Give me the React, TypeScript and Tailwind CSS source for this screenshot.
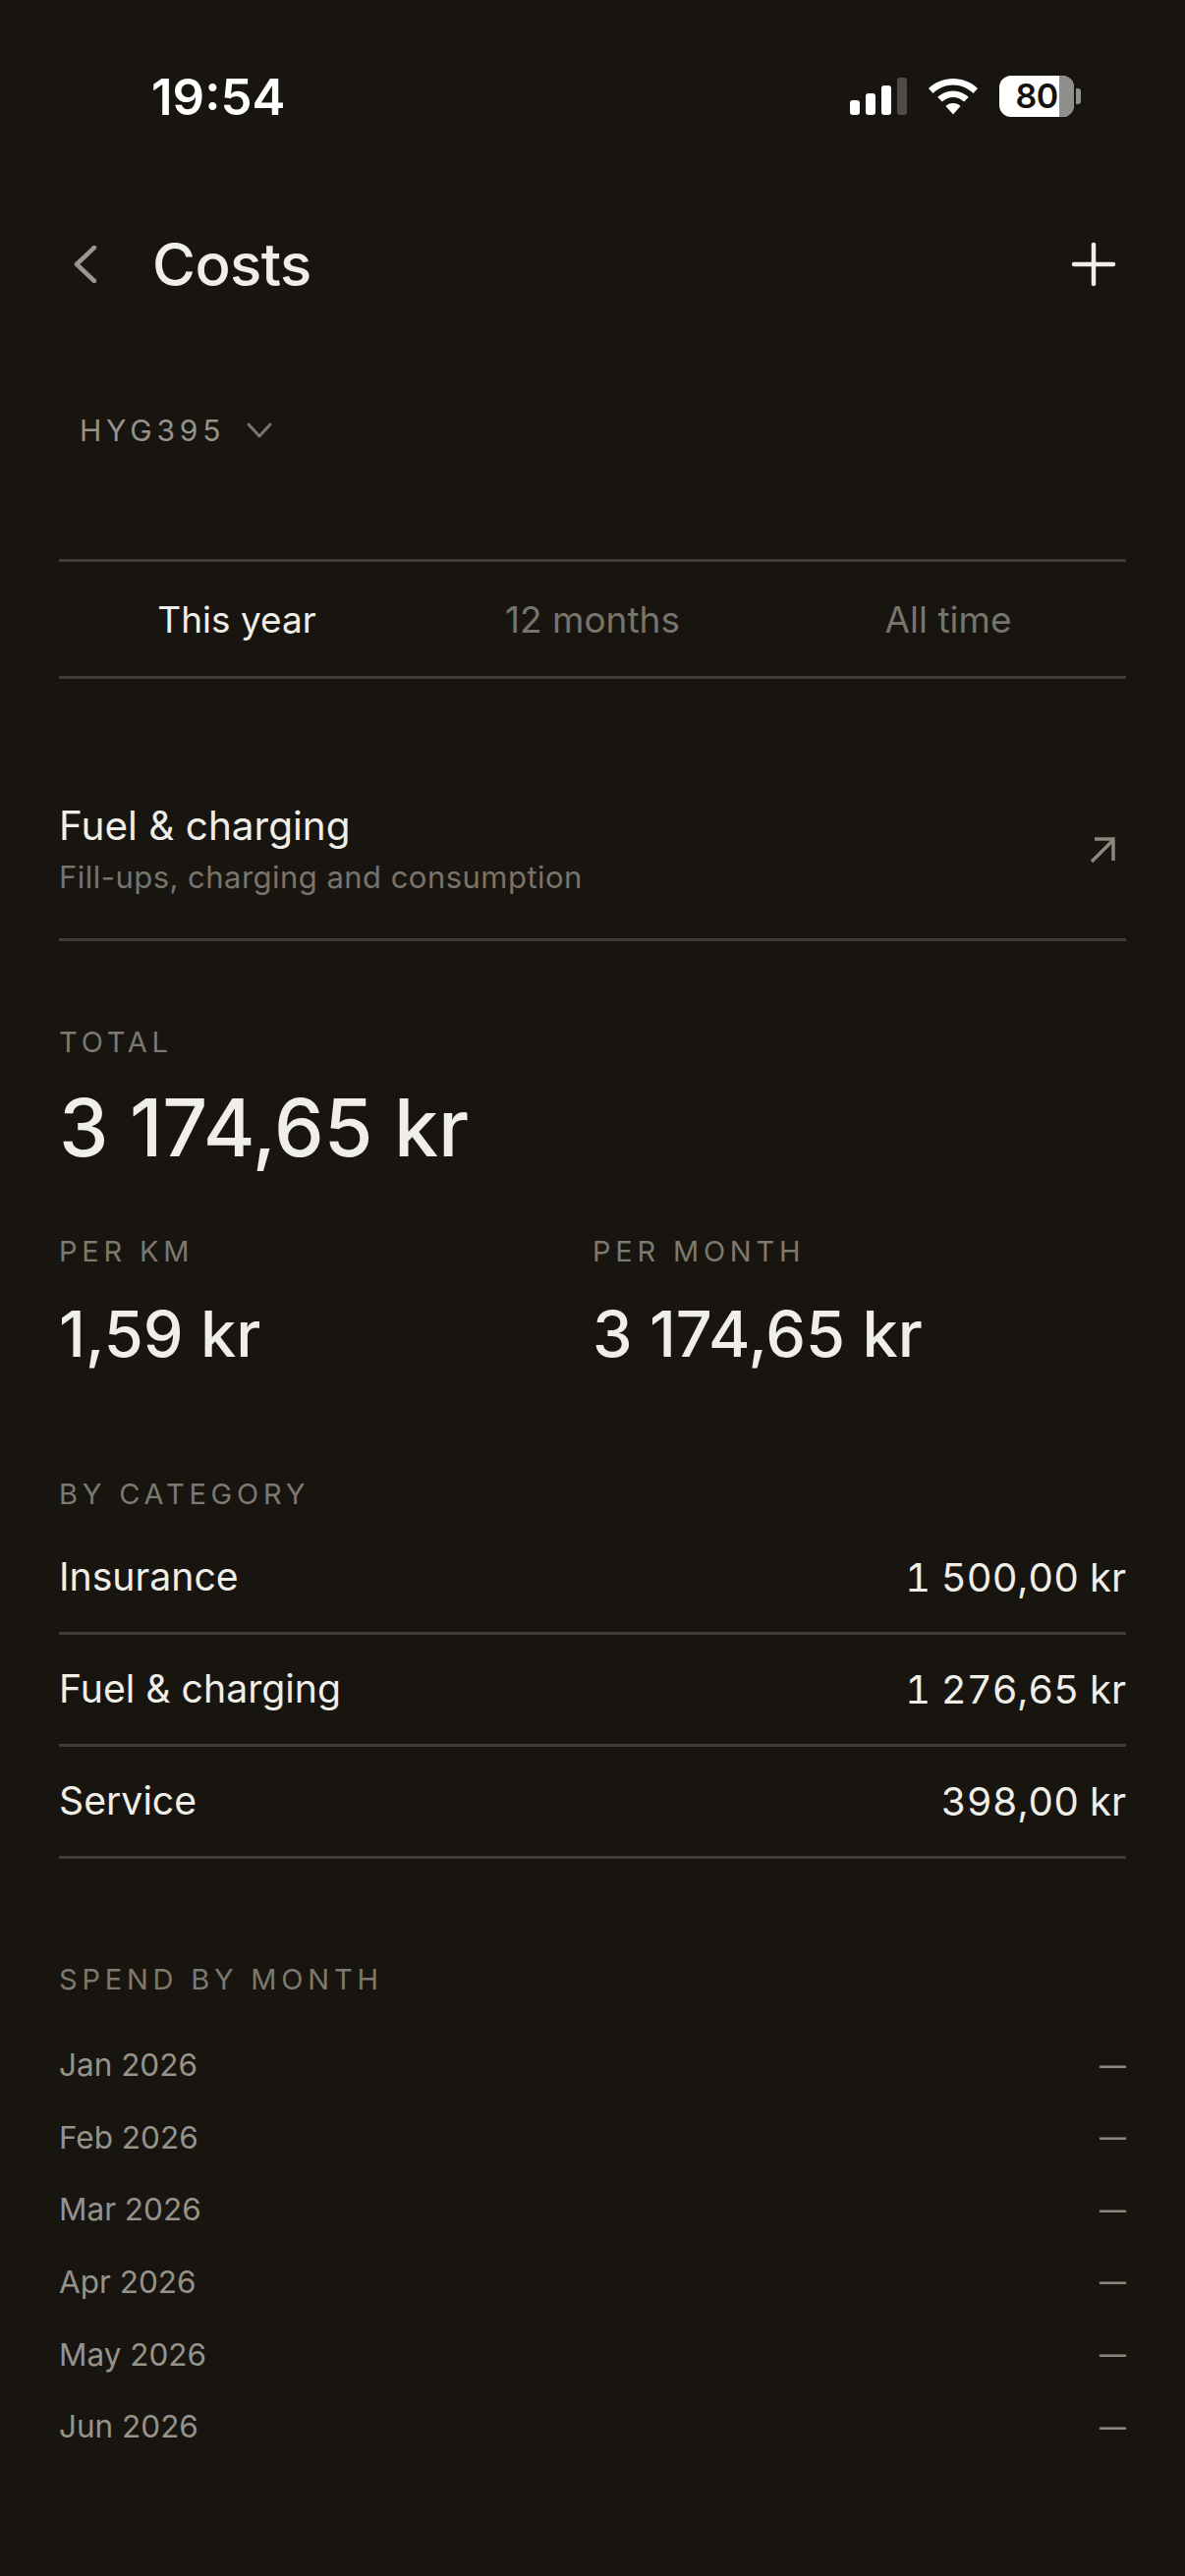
import React from 'react';

const categories = [
  { name: 'Insurance', amount: '1 500,00 kr' },
  { name: 'Fuel & charging', amount: '1 276,65 kr' },
  { name: 'Service', amount: '398,00 kr' },
];

const months = ['Jan 2026', 'Feb 2026', 'Mar 2026', 'Apr 2026', 'May 2026', 'Jun 2026'];

const Label: React.FC<{ children: React.ReactNode }> = ({ children }) => (
  <p className="text-[29px] leading-[34px] tracking-[0.165em] text-[#7c796f]">{children}</p>
);

const StatusBar: React.FC = () => (
  <div className="flex h-[229px] items-start justify-between pt-[74px] pl-[154px] pr-[106px]">
    <span className="text-[51px] leading-[50px] font-semibold text-white">19:54</span>
    <div className="flex items-center gap-[22px] pt-[3px]">
      <svg width="58" height="38" viewBox="0 0 58 38">
        <rect x="0" y="23" width="10" height="15" rx="3" fill="#fff" />
        <rect x="16" y="16" width="10" height="22" rx="3" fill="#fff" />
        <rect x="32" y="8" width="10" height="30" rx="3" fill="#fff" />
        <rect x="48" y="0" width="10" height="38" rx="3" fill="#4d4c48" />
      </svg>
      <svg width="50" height="37" viewBox="0 0 50 37" fill="#fff">
        <path d="M25 0 C34.5 0 43.5 3.8 50 10 L45.5 15 C40 9.8 32.8 6.6 25 6.6 C17.2 6.6 10 9.8 4.5 15 L0 10 C6.5 3.8 15.5 0 25 0 Z" />
        <path d="M25 12.5 C31 12.5 36.5 14.8 40.8 18.8 L36.2 23.6 C33.2 20.8 29.3 19 25 19 C20.7 19 16.8 20.8 13.8 23.6 L9.2 18.8 C13.5 14.8 19 12.5 25 12.5 Z" />
        <path d="M25 25 C28 25 30.6 26.1 32.5 28 L25 36.5 L17.5 28 C19.4 26.1 22 25 25 25 Z" />
      </svg>
      <div className="flex items-center gap-[2px]">
        <div className="relative flex h-[42px] w-[76px] items-center justify-center overflow-hidden rounded-[12px] bg-white">
          <div className="absolute inset-y-0 right-0 w-[15px] bg-[#8f8f8d]" />
          <span className="relative text-[34px] leading-none font-semibold tracking-[-0.02em] text-[#14120e]">80</span>
        </div>
        <div className="h-[16px] w-[5px] rounded-r-[3px] bg-[#8f8f8d]" />
      </div>
    </div>
  </div>
);

export default function App() {
  return (
    <div className="min-h-[2622px] bg-[#181510] font-['Inter',sans-serif]">
      <StatusBar />

      <div className="px-[60px]">
        <header className="flex h-[80px] items-center justify-between">
          <div className="flex items-center">
            <svg width="24" height="38" viewBox="0 0 24 38" className="ml-[15px]" fill="none">
              <path d="M21 2 L3 19 L21 36" stroke="#9a978e" strokeWidth="4.5" strokeLinecap="round" strokeLinejoin="round" />
            </svg>
            <h1 className="ml-[56px] text-[60px] leading-[80px] font-medium tracking-[-0.01em] text-[#f0eee9]">Costs</h1>
          </div>
          <svg width="48" height="48" viewBox="0 0 48 48" className="mr-[9px]" fill="none">
            <path d="M24 4 V44 M4 24 H44" stroke="#f0eee9" strokeWidth="4.5" strokeLinecap="round" />
          </svg>
        </header>

        <button className="mt-[109px] flex h-[40px] items-center pl-[21px]">
          <span className="text-[30px] leading-[40px] tracking-[0.16em] text-[#96938a]">HYG395</span>
          <svg width="26" height="16" viewBox="0 0 26 16" className="ml-[22px]" fill="none">
            <path d="M2 2 L13 14 L24 2" stroke="#77746b" strokeWidth="3" strokeLinecap="round" strokeLinejoin="round" />
          </svg>
        </button>

        <nav className="mt-[111px] grid h-[122px] grid-cols-3 items-center border-y-[3px] border-[#3f3d36] pt-[2px] text-center text-[37px]">
          <span className="text-[#f0eee9]">This year</span>
          <span className="text-[#77746b]">12 months</span>
          <span className="text-[#77746b]">All time</span>
        </nav>

        <div className="mt-[125px] flex items-center justify-between border-b-[3px] border-[#3f3d36] pb-[41px]">
          <div>
            <p className="text-[40.5px] leading-[50px] text-[#f0eee9]">Fuel &amp; charging</p>
            <p className="mt-[6px] text-[31px] leading-[42px] tracking-[0.015em] text-[#77746b]">Fill-ups, charging and consumption</p>
          </div>
          <svg width="28" height="28" viewBox="0 0 28 28" className="mr-[10px]" fill="none">
            <path d="M3 26 L25 4 M6 3 H25 V25" stroke="#8a877e" strokeWidth="3.5" />
          </svg>
        </div>

        <section className="mt-[86px]">
          <Label>TOTAL</Label>
          <p className="mt-[22px] text-[80.5px] leading-[96px] font-[450] text-[#f0eee9]">3 174,65 kr</p>
        </section>

        <section className="mt-[61px] grid grid-cols-2">
          <div>
            <Label>PER KM</Label>
            <p className="mt-[28px] text-[64.8px] leading-[78px] font-[450] text-[#f0eee9]">1,59 kr</p>
          </div>
          <div>
            <Label>PER MONTH</Label>
            <p className="mt-[28px] text-[64.8px] leading-[78px] font-[450] text-[#f0eee9]">3 174,65 kr</p>
          </div>
        </section>

        <section className="mt-[107px]">
          <Label>BY CATEGORY</Label>
          <div className="mt-[12px]">
            {categories.map(c => (
              <div key={c.name} className="flex h-[114px] items-center justify-between border-b-[3px] border-[#3f3d36] text-[39.2px] text-[#f0eee9]">
                <span>{c.name}</span>
                <span className="text-[40px] tabular-nums">{c.amount}</span>
              </div>
            ))}
          </div>
        </section>

        <section className="mt-[106px]">
          <Label>SPEND BY MONTH</Label>
          <div className="mt-[33px]">
            {months.map(m => (
              <div key={m} className="flex h-[73.6px] items-center justify-between text-[31.5px] text-[#96938a]">
                <span>{m}</span>
                <span className="mt-[2px] text-[27px] font-medium text-[#8a877e]">—</span>
              </div>
            ))}
          </div>
        </section>
      </div>
    </div>
  );
}
